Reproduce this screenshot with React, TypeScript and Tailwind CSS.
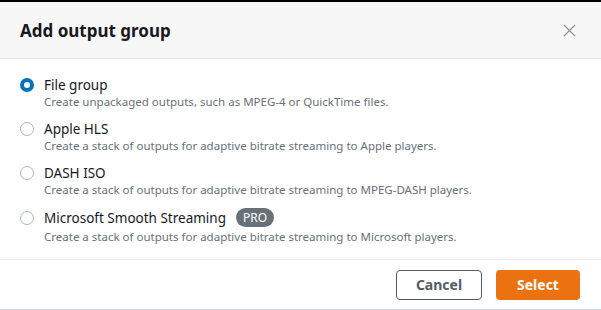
import React, { useState } from "react";

const options = [
  { id: "file", label: "File group", desc: "Create unpackaged outputs, such as MPEG-4 or QuickTime files." },
  { id: "hls", label: "Apple HLS", desc: "Create a stack of outputs for adaptive bitrate streaming to Apple players." },
  { id: "dash", label: "DASH ISO", desc: "Create a stack of outputs for adaptive bitrate streaming to MPEG-DASH players." },
  { id: "mss", label: "Microsoft Smooth Streaming", desc: "Create a stack of outputs for adaptive bitrate streaming to Microsoft players.", pro: true },
];

const App: React.FC = () => {
  const [selected, setSelected] = useState("file");

  return (
    <div className="w-[601px] h-[310px] bg-white border-t-2 border-black border-b border-b-[#d5dbdb] flex flex-col font-['Noto_Sans',sans-serif] text-[#16191f]">

      {/* HEADER */}
      <div className="h-[57px] shrink-0 bg-[#f7f7f7] border-b border-[#e4e4e4] flex items-center justify-between pl-5 pr-[24px]">
        <h1 className="text-[17px] font-bold leading-none">Add output group</h1>
        <button className="text-[#879196]">
          <svg width="15" height="15" viewBox="0 0 16 16" fill="none" stroke="currentColor" strokeWidth="1.5">
            <path d="M2 2l12 12M14 2L2 14" />
          </svg>
        </button>
      </div>

      {/* OPTIONS */}
      <div className="flex-1 pl-5 pt-[17px] flex flex-col gap-[11px]">
        {options.map((o) => (
          <label key={o.id} className="flex items-start gap-[10px] cursor-pointer" onClick={() => setSelected(o.id)}>
            <span className={o.pro ? "mt-[3px]" : "mt-[2px]"}>
              {selected === o.id ? (
                <span className="block w-[14px] h-[14px] rounded-full border-[4px] border-[#0073bb] bg-white" />
              ) : (
                <span className="block w-[14px] h-[14px] rounded-full border border-[#aab7b8] bg-white" />
              )}
            </span>
            <div>
              <div className="flex items-center gap-[10px] text-[13.5px] leading-[18px]">
                {o.label}
                {o.pro && (
                  <span className="bg-[#687078] text-white text-[12px] leading-[19px] px-[7px] rounded-full">PRO</span>
                )}
              </div>
              <p className={`text-[11.5px] leading-[15px] text-[#687078] ${o.pro ? "mt-[2px]" : ""}`}>{o.desc}</p>
            </div>
          </label>
        ))}
      </div>

      {/* FOOTER */}
      <div className="h-[50px] shrink-0 border-t border-[#eaeded] flex items-center justify-end gap-[14px] pr-[21px]">
        <button className="w-[86px] h-[30px] border border-[#545b64] rounded-sm text-[14px] font-bold text-[#545b64]">
          Cancel
        </button>
        <button className="w-[84px] h-[30px] bg-[#ec7211] rounded-sm text-[14px] font-bold text-white">
          Select
        </button>
      </div>

    </div>
  );
};

export default App;
